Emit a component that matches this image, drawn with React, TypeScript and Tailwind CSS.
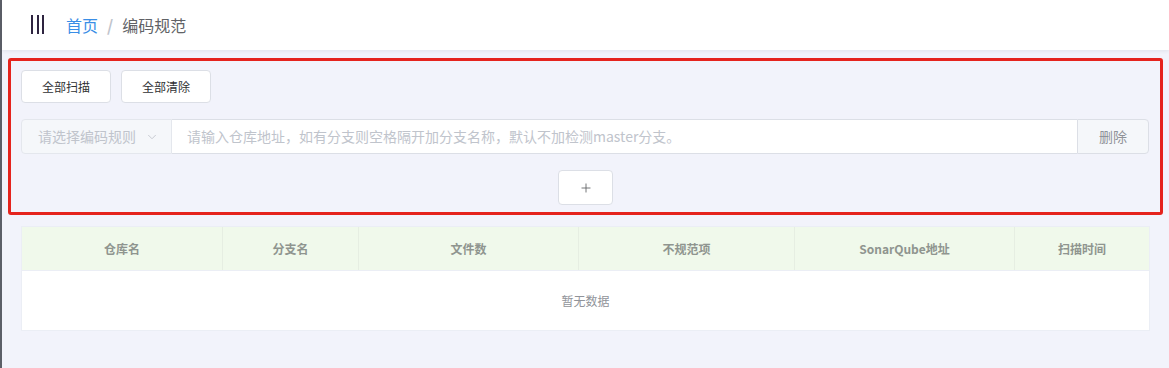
import { ChevronDown, Plus } from "lucide-react";

const columns = [
  { label: "仓库名", w: "w-[201px]" },
  { label: "分支名", w: "w-[136px]" },
  { label: "文件数", w: "w-[220px]" },
  { label: "不规范项", w: "w-[216px]" },
  { label: "SonarQube地址", w: "w-[220px]" },
  { label: "扫描时间", w: "flex-1" },
];

export default function App() {
  return (
    <div
      className="min-h-[368px] bg-[#f2f3fb] border-l-2 border-[#5c5f68]"
      style={{ fontFamily: '"Noto Sans CJK SC", "Noto Sans", sans-serif' }}
    >
      {/* top bar */}
      <header className="h-[50px] bg-white flex items-center shadow-[0_1px_4px_rgba(0,21,41,0.08)]">
        <div className="ml-[29px] flex gap-[3.5px] h-[19px] mt-[-1px]">
          <span className="w-[2px] bg-[#2e2440]" />
          <span className="w-[2px] bg-[#2e2440]" />
          <span className="w-[2px] bg-[#2e2440]" />
        </div>
        <nav className="ml-[22px] flex items-center text-[16px] leading-none">
          <span className="text-[#3a8ee6]">首页</span>
          <span className="mx-[9px] text-[#c0c4cc] font-bold">/</span>
          <span className="text-[#606266]">编码规范</span>
        </nav>
      </header>

      <div className="pt-[8px] px-[6px]">
        <div className="border-[3px] border-[#e5231d] rounded-[3px] h-[157px] pt-[9px] px-[10px]">
          <div className="flex gap-[10px]">
            <button className="w-[90px] h-[33px] bg-white border border-[#dcdfe6] rounded-[4px] text-[12px] text-[#303133]">
              全部扫描
            </button>
            <button className="w-[90px] h-[33px] bg-white border border-[#dcdfe6] rounded-[4px] text-[12px] text-[#303133]">
              全部清除
            </button>
          </div>

          <div className="mt-[16px] flex h-[35px] text-[14px] pr-[1px]">
            <div className="w-[151px] bg-[#f5f7fa] border border-[#e4e7ed] rounded-l-[4px] flex items-center pl-[16px] pr-[12px] text-[#c0c4cc]">
              <span className="flex-1">请选择编码规则</span>
              <ChevronDown size={14} strokeWidth={1.5} className="text-[#c0c4cc]" />
            </div>
            <div className="flex-1 bg-white border-y border-[#dcdfe6] flex items-center pl-[15px] text-[#c0c4cc]">
              请输入仓库地址，如有分支则空格隔开加分支名称，默认不加检测master分支。
            </div>
            <div className="w-[72px] bg-[#f5f7fa] border border-[#dcdfe6] rounded-r-[4px] flex items-center justify-center text-[#909399]">
              删除
            </div>
          </div>

          <div className="mt-[16px] flex justify-center">
            <button className="w-[55px] h-[35px] bg-white border border-[#dcdfe6] rounded-[4px] flex items-center justify-center text-[#606266]">
              <Plus size={14} strokeWidth={1.5} />
            </button>
          </div>
        </div>
      </div>

      {/* table */}
      <div className="mt-[11px] mx-[19px] bg-white border border-[#ebeef5]">
        <div className="flex h-[43px] bg-[#f0f9eb]">
          {columns.map((c, i) => (
            <div
              key={c.label}
              className={`${c.w} flex items-center justify-center text-[12px] font-bold text-[#8f958f] ${
                i < columns.length - 1 ? "border-r border-[#e6eee2]" : ""
              }`}
            >
              {c.label}
            </div>
          ))}
        </div>
        <div className="h-[60px] flex items-center justify-center text-[12px] text-[#909399] border-t border-[#ebeef5]">
          暂无数据
        </div>
      </div>
    </div>
  );
}
